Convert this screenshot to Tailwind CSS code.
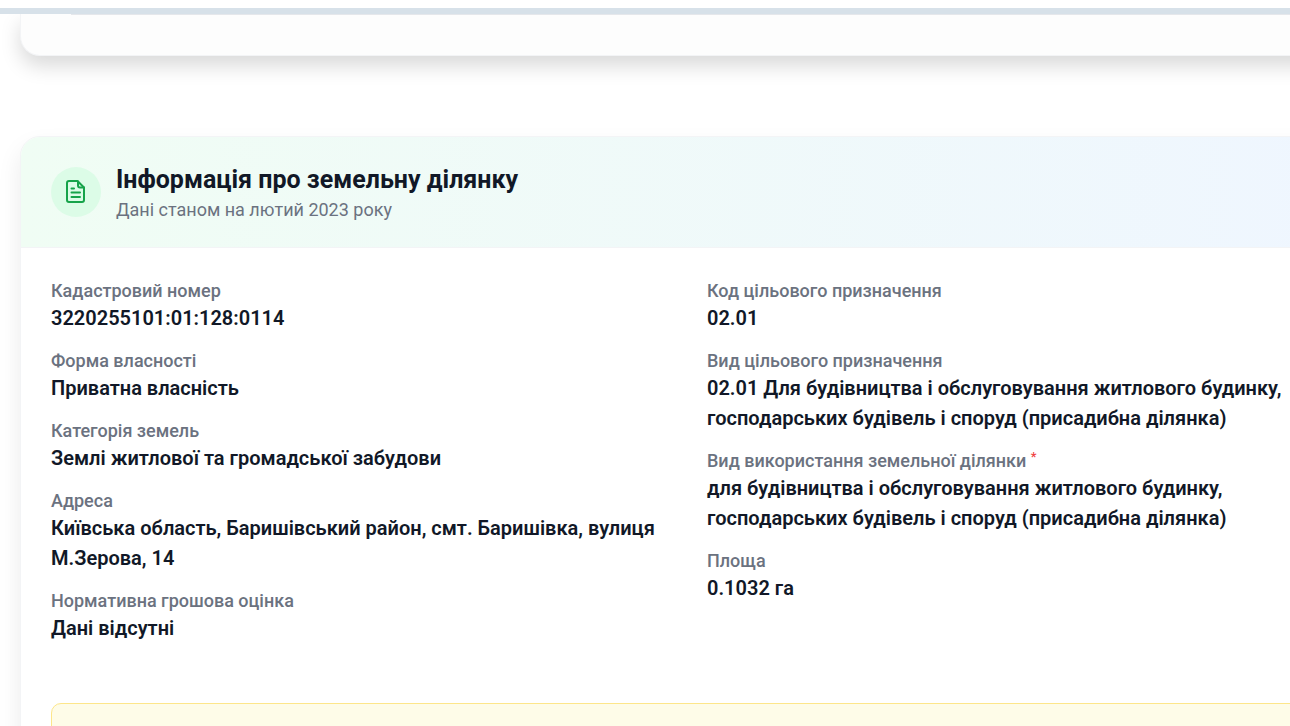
<!DOCTYPE html>
<html lang="uk">
<head>
  <meta charset="UTF-8">
  <title>Інформація про земельну ділянку</title>
  <meta name="viewport" content="width=device-width, initial-scale=1.0">
  <script src="https://cdn.jsdelivr.net/npm/@tailwindcss/browser@4"></script>
</head>
<body class="bg-white font-[Roboto,sans-serif] text-[#111827] overflow-hidden">
  <header class="relative z-10 h-[14px] bg-white border-b-[6px] border-[#d7e1e9]"></header>

  <main class="pl-5 -mr-[74px]">
    <section class="h-[42px] bg-[#fdfdfd] border border-t-0 border-gray-100 rounded-b-[20px] shadow-[0_10px_20px_rgba(0,0,0,0.15)]">
      <div class="ml-[50px] border-t border-gray-200"></div>
    </section>

    <section class="mt-20 bg-white border border-gray-100 rounded-[20px] shadow-[0_12px_24px_rgba(0,0,0,0.08)]">
      <div class="flex items-center gap-[15px] px-[30px] py-[25px] rounded-t-[19px] border-b border-gray-100 bg-linear-to-r/srgb from-[#f0fdf4] to-[#eff6ff]">
        <div class="flex items-center justify-center size-[50px] rounded-full bg-[#dcfce7]">
          <svg class="size-[26px] text-[#16a34a]" viewBox="0 0 26 26" fill="none" stroke="currentColor" stroke-width="2" stroke-linecap="round" stroke-linejoin="round">
            <path d="M14.500 2H6a2 2 0 0 0-2 2v17a2 2 0 0 0 2 2h13a2 2 0 0 0 2-2V8.500z"/>
            <path d="M15 2.500V6.500a2 2 0 0 0 2 2h4"/>
            <path d="M8.500 9.500h2.500M8.500 13.500h8.500M8.500 18h8.500"/>
          </svg>
        </div>
        <div>
          <h2 class="text-[25px] leading-[35px] font-bold">Інформація про земельну ділянку</h2>
          <p class="text-[18px] leading-[25px] text-[#6b7280]">Дані станом на лютий 2023 року</p>
        </div>
      </div>

      <div class="p-[30px]">
        <div class="grid grid-cols-2 gap-[30px]">
          <dl class="flex flex-col gap-[15px]">
            <div>
              <dt class="text-[18px] leading-[25px] font-medium text-[#6b7280]">Кадастровий номер</dt>
              <dd class="text-[20px] leading-[30px] font-semibold">3220255101:01:128:0114</dd>
            </div>
            <div>
              <dt class="text-[18px] leading-[25px] font-medium text-[#6b7280]">Форма власності</dt>
              <dd class="text-[20px] leading-[30px] font-semibold">Приватна власність</dd>
            </div>
            <div>
              <dt class="text-[18px] leading-[25px] font-medium text-[#6b7280]">Категорія земель</dt>
              <dd class="text-[20px] leading-[30px] font-semibold">Землі житлової та громадської забудови</dd>
            </div>
            <div>
              <dt class="text-[18px] leading-[25px] font-medium text-[#6b7280]">Адреса</dt>
              <dd class="text-[20px] leading-[30px] font-semibold">Київська область, Баришівський район, смт. Баришівка, вулиця М.Зерова, 14</dd>
            </div>
            <div>
              <dt class="text-[18px] leading-[25px] font-medium text-[#6b7280]">Нормативна грошова оцінка</dt>
              <dd class="text-[20px] leading-[30px] font-semibold">Дані відсутні</dd>
            </div>
          </dl>

          <dl class="flex flex-col gap-[15px]">
            <div>
              <dt class="text-[18px] leading-[25px] font-medium text-[#6b7280]">Код цільового призначення</dt>
              <dd class="text-[20px] leading-[30px] font-semibold">02.01</dd>
            </div>
            <div>
              <dt class="text-[18px] leading-[25px] font-medium text-[#6b7280]">Вид цільового призначення</dt>
              <dd class="text-[20px] leading-[30px] font-semibold">02.01 Для будівництва і обслуговування житлового будинку, господарських будівель і споруд (присадибна ділянка)</dd>
            </div>
            <div>
              <dt class="text-[18px] leading-[25px] font-medium text-[#6b7280]">Вид використання земельної ділянки <sup class="text-[13px] text-[#ef4444]">*</sup></dt>
              <dd class="text-[20px] leading-[30px] font-semibold">для будівництва і обслуговування житлового будинку, господарських будівель і споруд (присадибна ділянка)</dd>
            </div>
            <div>
              <dt class="text-[18px] leading-[25px] font-medium text-[#6b7280]">Площа</dt>
              <dd class="text-[20px] leading-[30px] font-semibold">0.1032 га</dd>
            </div>
          </dl>
        </div>

        <div class="mt-[60px] h-16 rounded-[10px] border border-[#fde68a] bg-[#fefce8]"></div>
      </div>
    </section>
  </main>
</body>
</html>
